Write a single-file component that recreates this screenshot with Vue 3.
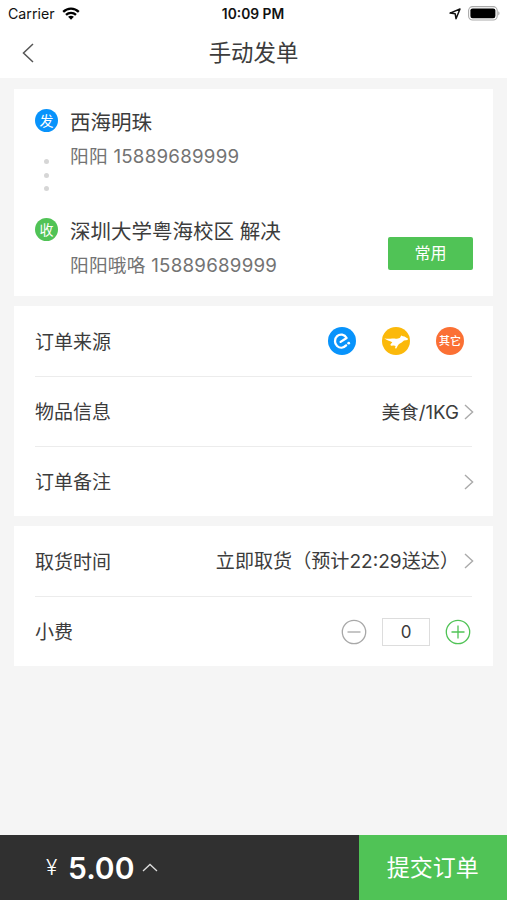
<script setup>
import { ref } from 'vue'

const sender = { name: '西海明珠', contact: '阳阳', phone: '15889689999' }
const receiver = { name: '深圳大学粤海校区 解决', contact: '阳阳哦咯', phone: '15889689999' }
const tip = ref(0)
const price = '5.00'
</script>

<template>
  <div class="screen">
    <header class="status">
      <div class="status-left">
        <span class="carrier">Carrier</span>
        <svg class="wifi" viewBox="0 0 18 13" fill="none" stroke="#000" stroke-width="2.3">
          <path d="M1.2 4.9C5.6.6 12.4.6 16.8 4.9" />
          <path d="M4 7.9c2.9-2.8 7.1-2.8 10 0" />
          <path d="M6.1 9.8c1.7-1.5 4.1-1.5 5.8 0L9 12.8z" fill="#000" stroke="none" />
        </svg>
      </div>
      <span class="clock">10:09 PM</span>
      <div class="status-right">
        <svg class="location" viewBox="0 0 12 12" fill="none" stroke="#111" stroke-width="1.5" stroke-linejoin="round">
          <path d="M11 1 7 10.7 6.2 5.8 1 5.1z" />
        </svg>
        <svg class="battery" viewBox="0 0 32 15">
          <rect x=".6" y=".6" width="28.6" height="13.4" rx="4" fill="#fff" stroke="#aaa" stroke-width="1.1" />
          <rect x="2.4" y="2.4" width="25" height="9.8" rx="2.2" fill="#000" />
          <path d="M30.4 5.2c1.4.7 1.4 3.5 0 4.2z" fill="#999" />
        </svg>
      </div>
    </header>

    <nav class="nav">
      <svg class="back" viewBox="0 0 12 20" fill="none" stroke="#555" stroke-width="1.5">
        <path d="M11 1 1.5 10 11 19" />
      </svg>
      <h1>手动发单</h1>
    </nav>

    <main>
      <section class="card route">
        <div class="rail">
          <span class="mark send">发</span>
          <div class="dots"><i /><i /><i /></div>
          <span class="mark receive">收</span>
        </div>
        <div class="places">
          <div class="place">
            <p class="name">{{ sender.name }}</p>
            <p class="contact">{{ sender.contact }} <span>{{ sender.phone }}</span></p>
          </div>
          <div class="place">
            <p class="name">{{ receiver.name }}</p>
            <p class="contact">{{ receiver.contact }} <span>{{ receiver.phone }}</span></p>
          </div>
        </div>
        <button class="common">常用</button>
      </section>

      <section class="card">
        <div class="row">
          <span class="label">订单来源</span>
          <div class="sources">
            <svg viewBox="0 0 28 28">
              <circle cx="14" cy="14" r="14" fill="#0893fb" />
              <path d="M12.6 14.9 18.600 11C16.600 7.300 12 6.500 9.100 9.200 6.300 11.900 6.300 16.500 9.100 19c2.800 2.400 6.600 2 9-.6" fill="none" stroke="#fff" stroke-width="2.300" stroke-linecap="round" stroke-linejoin="round" />
              <circle cx="20.700" cy="16.200" r="1.400" fill="#fff" />
            </svg>
            <svg viewBox="0 0 28 28">
              <circle cx="14" cy="14" r="14" fill="#fbb90b" />
              <path d="M2.300 11.300c3 .9 5.200.4 8 .3 3-.1 5.300.500 7.700-.9l1.200-2.200 1.700.7 1.600.2 3.600 2.300-.6 1.200-3.500.5c-1.500 1.300-3 2.600-5 3.700l-1.300 1.600-1.400 2.700-1.300-.1.600-2.300-1.700-.5-3 .2-.5-1.200 1.900-2.200C7.500 13.900 4.500 13.300 2.300 11.300z" fill="#fff" />
            </svg>
            <span class="other">其它</span>
          </div>
        </div>
        <div class="row">
          <span class="label">物品信息</span>
          <span class="value goods">美食/1KG</span>
          <svg class="chevron" viewBox="0 0 10 16"><path d="M1 1l7.600 7L1 15" /></svg>
        </div>
        <div class="row">
          <span class="label">订单备注</span>
          <svg class="chevron" viewBox="0 0 10 16"><path d="M1 1l7.600 7L1 15" /></svg>
        </div>
      </section>

      <section class="card">
        <div class="row">
          <span class="label">取货时间</span>
          <span class="value time">立即取货（预计22:29送达）</span>
          <svg class="chevron" viewBox="0 0 10 16"><path d="M1 1l7.600 7L1 15" /></svg>
        </div>
        <div class="row">
          <span class="label">小费</span>
          <div class="stepper">
            <svg class="minus" viewBox="0 0 26 26" @click="tip = Math.max(0, tip - 1)">
              <circle cx="13" cy="13" r="11.700" /><path d="M6.500 13h13" />
            </svg>
            <span class="count">{{ tip }}</span>
            <svg class="plus" viewBox="0 0 26 26" @click="tip++">
              <circle cx="13" cy="13" r="11.700" /><path d="M6.500 13h13M13 6.500v13" />
            </svg>
          </div>
        </div>
      </section>
    </main>

    <footer class="bar">
      <div class="total">
        <span class="yen">¥</span>
        <span class="price">{{ price }}</span>
        <svg class="up" viewBox="0 0 16 9" fill="none" stroke="#ddd" stroke-width="1.3"><path d="M1 8l7-6.500L15 8" /></svg>
      </div>
      <button class="submit">提交订单</button>
    </footer>
  </div>
</template>

<style>
body {
  margin: 0;
}
</style>

<style scoped>
.screen {
  display: flex;
  flex-direction: column;
  height: 900px;
  background: #f5f5f5;
  color: #3c3c3c;
  font-family: Inter, "Noto Sans CJK SC", sans-serif;
}
p, h1 {
  margin: 0;
  font-weight: 400;
}
button {
  border: 0;
  padding: 0;
  color: #fff;
  background: #50c356;
  font-family: inherit;
}
.status {
  display: grid;
  grid-template-columns: 1fr auto 1fr;
  align-items: center;
  box-sizing: border-box;
  height: 28px;
  padding: 0 7px 1px 8px;
  background: #fff;
  color: #111;
}
.status-left, .status-right {
  display: flex;
  align-items: center;
}
.carrier {
  font-size: 14.2px;
}
.wifi {
  width: 18px;
  height: 13px;
  margin-left: 7px;
}
.clock {
  margin-right: 2px;
  font-size: 13.8px;
  font-weight: 600;
}
.status-right {
  justify-content: flex-end;
}
.location {
  width: 12px;
  height: 12px;
  margin-right: 7px;
}
.battery {
  width: 32px;
  height: 15px;
}
.nav {
  display: grid;
  grid-template-columns: 40px 1fr 40px;
  align-items: center;
  box-sizing: border-box;
  height: 50px;
  padding-bottom: 1px;
  background: #fff;
}
.back {
  width: 12px;
  height: 20px;
  margin-left: 22px;
}
h1 {
  font-size: 22.4px;
  line-height: 48px;
  text-align: center;
}
main {
  flex: 1;
  display: flex;
  flex-direction: column;
  gap: 10px;
  padding: 11px 14px 0;
}
.card {
  background: #fff;
  padding: 0 21px;
}
.route {
  display: flex;
  box-sizing: border-box;
  height: 207px;
  padding-top: 20px;
}
.rail {
  display: flex;
  flex-direction: column;
  align-items: center;
  width: 23px;
}
.mark {
  display: flex;
  align-items: center;
  justify-content: center;
  width: 23px;
  height: 23px;
  border-radius: 50%;
  color: #fff;
  font-size: 14px;
  line-height: 20px;
}
.send {
  background: #0893fb;
}
.receive {
  background: #50c356;
}
.dots {
  display: flex;
  flex-direction: column;
  align-items: center;
  gap: 8.500px;
  height: 59px;
  padding-top: 27px;
}
.dots i {
  width: 5px;
  height: 5px;
  border-radius: 50%;
  background: #d6d6d6;
}
.places {
  flex: 1;
  padding: 2px 0 0 12px;
}
.place {
  height: 109px;
}
.name {
  font-size: 20.500px;
  line-height: 24px;
  white-space: nowrap;
}
.contact {
  margin-top: 9px;
  color: #737373;
  font-size: 18.700px;
  line-height: 26px;
  letter-spacing: .25px;
  white-space: nowrap;
}
.common {
  width: 85px;
  height: 33px;
  margin: 127.500px -1px 0 0;
  padding-bottom: 3px;
  border-radius: 2px;
  font-size: 16px;
}
.row {
  display: flex;
  align-items: center;
  box-sizing: border-box;
  height: 70px;
}
.row + .row {
  border-top: 1px solid #ececec;
}
.label, .value {
  padding-bottom: 2px;
  font-size: 19px;
}
.label {
  flex: 1;
}
.value {
  white-space: nowrap;
}
.goods {
  font-size: 18.700px;
}
.time {
  font-size: 19.100px;
}
.chevron {
  width: 10px;
  height: 16px;
  margin: 0 -2px 0 5px;
  fill: none;
  stroke: #aaa;
  stroke-width: 1.400;
}
.sources {
  display: flex;
  gap: 26px;
  margin-right: 8px;
}
.sources svg, .other {
  width: 28px;
  height: 28px;
}
.other {
  border-radius: 50%;
  background: #fb7034;
  color: #fff;
  font-size: 11px;
  font-weight: 500;
  line-height: 28px;
  text-align: center;
}
.stepper {
  display: flex;
  align-items: center;
  gap: 15px;
  margin-right: 1px;
}
.stepper svg {
  width: 26px;
  height: 26px;
  fill: none;
  stroke-width: 1.300;
}
.minus {
  stroke: #a8a8a8;
}
.plus {
  stroke: #50c356;
}
.count {
  box-sizing: border-box;
  width: 48px;
  height: 28px;
  border: 1.500px solid #ddd;
  font-size: 17px;
  line-height: 26px;
  text-align: center;
}
.bar {
  display: flex;
  height: 65px;
  background: #303030;
}
.total {
  flex: 1;
  display: flex;
  align-items: center;
  padding-left: 46px;
  color: #fff;
}
.yen {
  width: 22px;
  font-size: 21px;
  font-weight: 300;
}
.price {
  font-size: 30px;
  font-weight: 600;
}
.up {
  width: 16px;
  height: 9px;
  margin-left: 8px;
}
.submit {
  width: 148.500px;
  padding-bottom: 3px;
  font-size: 23px;
}
</style>
